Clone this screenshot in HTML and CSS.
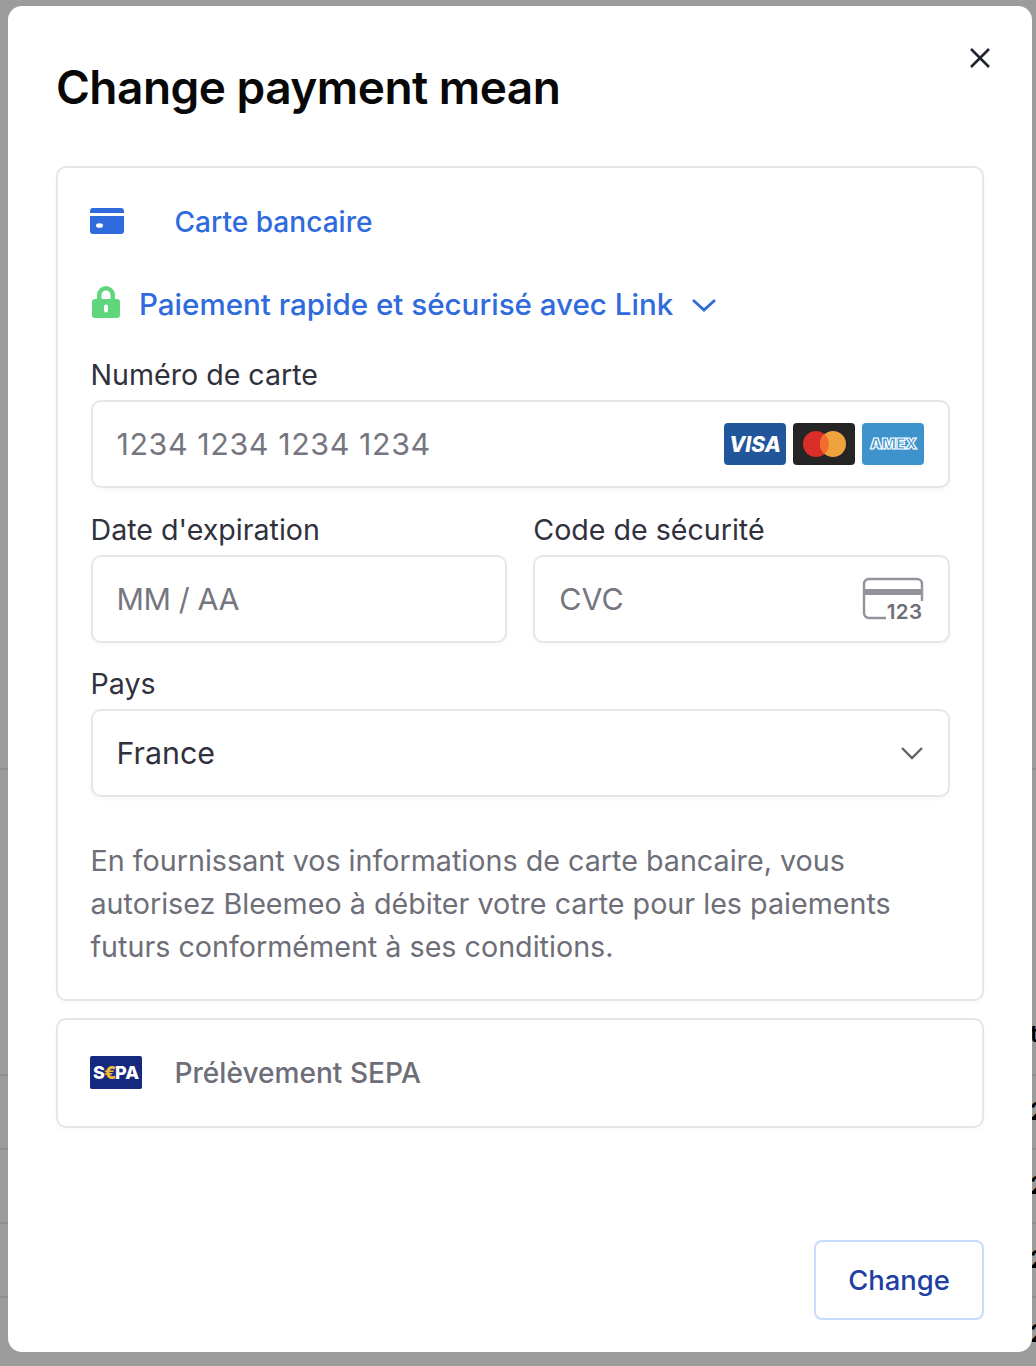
FILE: index.html
```html
<!DOCTYPE html>
<html lang="fr">
<head>
<meta charset="utf-8">
<title>Change payment mean</title>
<link rel="stylesheet" href="styles.css">
</head>
<body>
<div class="backdrop">
  <div class="bg-row bg-row-first"><span class="bg-glyph bg-t">t</span></div>
  <div class="bg-row"><span class="bg-glyph">2</span></div>
  <div class="bg-row"><span class="bg-glyph">2</span></div>
  <div class="bg-row"><span class="bg-glyph">2</span></div>
  <div class="bg-row bg-row-last"><span class="bg-glyph">2</span></div>
</div>
<div class="modal">
  <button class="close" aria-label="Close">
    <svg width="22" height="22" viewBox="0 0 22 22"><path d="M2 2 20 20M20 2 2 20" fill="none" stroke="#1f2430" stroke-width="2.600"/></svg>
  </button>
  <h1 class="title">Change payment mean</h1>
  <section class="card card-open">
    <div class="tab">
      <span class="tab-icon">
        <svg width="34" height="26" viewBox="0 0 34 26"><path d="M3 0h28a3 3 0 0 1 3 3v2H0V3a3 3 0 0 1 3-3Z" fill="#2f6bdc"/><path fill-rule="evenodd" d="M0 8h34v15a3 3 0 0 1-3 3H3a3 3 0 0 1-3-3V8Zm6 9.500a3.500 2.300 0 1 0 7 0 3.500 2.300 0 1 0-7 0Z" fill="#2f6bdc"/></svg>
      </span>
      <span class="tab-label tab-label-active">Carte bancaire</span>
    </div>
    <div class="link-row">
      <svg class="lock" width="28" height="32" viewBox="0 0 28 32"><path fill-rule="evenodd" d="M5 13V9a9 9 0 0 1 18 0v4h2a3 3 0 0 1 3 3v13a3 3 0 0 1-3 3H3a3 3 0 0 1-3-3V16a3 3 0 0 1 3-3h2Zm4.500 0h9V9a4.500 4.500 0 0 0-9 0v4Zm2.500 7.500v4a2 2 0 0 0 4 0v-4a2 2 0 0 0-4 0Z" fill="#5fd67c"/></svg>
      <span class="link-text">Paiement rapide et sécurisé avec Link</span>
      <svg class="link-chevron" width="26" height="16" viewBox="0 0 26 16"><path d="M2 3 13 13 24 3" fill="none" stroke="#2f6bdc" stroke-width="2.800"/></svg>
    </div>
    <div class="field">
      <label class="label">Numéro de carte</label>
      <div class="input">
        <span class="placeholder placeholder-digits">1234 1234 1234 1234</span>
        <span class="brands">
          <svg width="62" height="42" viewBox="0 0 62 42"><rect width="62" height="42" rx="4" fill="#22569c"/><text x="31" y="29" text-anchor="middle" class="visa">VISA</text></svg>
          <svg width="62" height="42" viewBox="0 0 62 42"><rect width="62" height="42" rx="4" fill="#252525"/><circle cx="23" cy="21" r="13" fill="#dc2e28"/><circle cx="40" cy="21" r="13" fill="#eea33f"/><path d="M31.500 11.200a13 13 0 0 1 0 19.600 13 13 0 0 1 0-19.600Z" fill="#f26c2c"/></svg>
          <svg width="62" height="42" viewBox="0 0 62 42"><rect width="62" height="42" rx="4" fill="#3f93cc"/><text x="8" y="26" textLength="47" lengthAdjust="spacingAndGlyphs" class="amex">AMEX</text></svg>
        </span>
      </div>
    </div>
    <div class="field-row">
      <div class="field">
        <label class="label">Date d'expiration</label>
        <div class="input"><span class="placeholder placeholder-date">MM / AA</span></div>
      </div>
      <div class="field">
        <label class="label">Code de sécurité</label>
        <div class="input">
          <span class="placeholder">CVC</span>
          <svg class="cvc" width="62" height="44" viewBox="0 0 62 44"><path d="M24 41H7a5 5 0 0 1-5-5V7a5 5 0 0 1 5-5h48a5 5 0 0 1 5 5v17" fill="none" stroke="#92939b" stroke-width="2.400"/><rect x="2" y="12" width="58" height="6" fill="#92939b"/><text x="42.500" y="42" text-anchor="middle" class="cvc-num">123</text></svg>
        </div>
      </div>
    </div>
    <div class="field">
      <label class="label">Pays</label>
      <div class="input">
        <span class="value">France</span>
        <svg class="select-chevron" width="24" height="14" viewBox="0 0 24 14"><path d="M2 2 12 12 22 2" fill="none" stroke="#5f626c" stroke-width="2.400"/></svg>
      </div>
    </div>
    <p class="notice">En fournissant vos informations de carte bancaire, vous autorisez Bleemeo à débiter votre carte pour les paiements futurs conformément à ses conditions.</p>
  </section>
  <section class="card card-closed">
    <div class="tab">
      <span class="tab-icon">
        <svg width="52" height="33" viewBox="0 0 52 33"><rect width="52" height="33" rx="2" fill="#15297f"/><text x="3" y="23" class="sepa">S</text><text x="14" y="23" class="sepa sepa-euro">€</text><text x="25" y="23" class="sepa">PA</text></svg>
      </span>
      <span class="tab-label">Prélèvement SEPA</span>
    </div>
  </section>
  <div class="footer">
    <button class="btn">Change</button>
  </div>
</div>
</body>
</html>
```
FILE: styles.css
```css
* { box-sizing: border-box; }
html, body { margin: 0; height: 100%; }
body {
  position: relative;
  width: 1036px;
  height: 1366px;
  overflow: hidden;
  background: #9c9c9c;
  font-family: Inter, "Liberation Sans", sans-serif;
  color: #30313d;
}
.backdrop { padding-top: 768px; }
.bg-row {
  height: 74px;
  border-top: 2px solid #8e8e8e;
  position: relative;
}
.bg-row-first { height: 306px; }
.bg-glyph {
  position: absolute;
  left: 1030px;
  bottom: 24px;
  font-size: 24px;
  line-height: 24px;
  font-weight: 600;
  color: #000;
}
.bg-t { bottom: 28px; }
.modal {
  position: absolute;
  left: 8px;
  top: 6px;
  width: 1024px;
  height: 1346px;
  background: #fff;
  border-radius: 14px;
  padding: 0 48px;
  display: flex;
  flex-direction: column;
}
.close {
  position: absolute;
  top: 41px;
  right: 41px;
  width: 22px;
  height: 22px;
  padding: 0;
  border: 0;
  background: none;
  display: flex;
}
.title {
  margin: 51px 0 49px 0;
  font-size: 46px;
  line-height: 60px;
  font-weight: 600;
  letter-spacing: -0.52px;
  color: #080808;
}
.card {
  border: 2px solid #e6e6e6;
  border-radius: 10px;
  box-shadow: 0 2px 4px rgba(0,0,0,.03);
  padding: 0 32px 0 32.5px;
}
.card-open { height: 835px; padding-top: 38px; }
.card-closed { height: 110px; margin-top: 17px; padding-top: 37px; }
.tab { display: flex; align-items: center; height: 32px; margin-left: -0.5px; }
.tab-icon { width: 84.5px; display: flex; margin-top: -2px; }
.tab-label { font-size: 28.1px; font-weight: 500; color: #6d6e78; }
.tab-label-active { color: #2f6bdc; }
.link-row { display: flex; align-items: center; margin: 48px 0 36px; height: 36px; }
.lock { margin-left: 1.5px; margin-top: -4px; }
.link-text { margin-left: 19px; font-size: 29.55px; font-weight: 500; color: #2f6bdc; }
.link-chevron { margin-left: 18px; margin-top: 2px; }
.field { margin-top: 24.7px; }
.label { display: block; font-size: 28.6px; line-height: 34px; color: #30313d; }
.input {
  height: 88px;
  margin-top: 8px;
  padding: 0 24px;
  border: 2px solid #e6e6e6;
  border-radius: 10px;
  box-shadow: 0 2px 4px rgba(0,0,0,.04);
  display: flex;
  align-items: center;
  justify-content: space-between;
  font-size: 30.4px;
}
.placeholder { color: #757680; }
.placeholder-digits { letter-spacing: 0.6px; }
.placeholder-date { letter-spacing: -0.4px; }
.value { color: #30313d; }
.brands { display: flex; gap: 7px; }
.visa { font: italic 800 21px Inter, sans-serif; fill: #fff; }
.amex { font: 900 15px Inter, sans-serif; fill: #3f93cc; stroke: #fff; stroke-width: 1.200px; }
.sepa { font: 800 18px Inter, sans-serif; fill: #fff; }
.sepa-euro { fill: #f2b632; }
.cvc-num { font: 600 20.5px Inter, sans-serif; letter-spacing: .4px; fill: #6d6e78; paint-order: stroke; stroke: #fff; stroke-width: 5px; }
.field-row { display: grid; grid-template-columns: 1fr 1fr; gap: 26px; }
.notice {
  margin: 41.500px 0 0;
  font-size: 28.7px;
  line-height: 43px;
  color: #6d6e78;
}
.footer { margin-top: auto; padding-bottom: 32px; display: flex; justify-content: flex-end; }
.btn {
  width: 170px;
  height: 80px;
  border: 2px solid #c9dcfb;
  border-radius: 8px;
  background: #fff;
  font: 500 27.4px Inter, sans-serif;
  color: #213fa3;
}
```
